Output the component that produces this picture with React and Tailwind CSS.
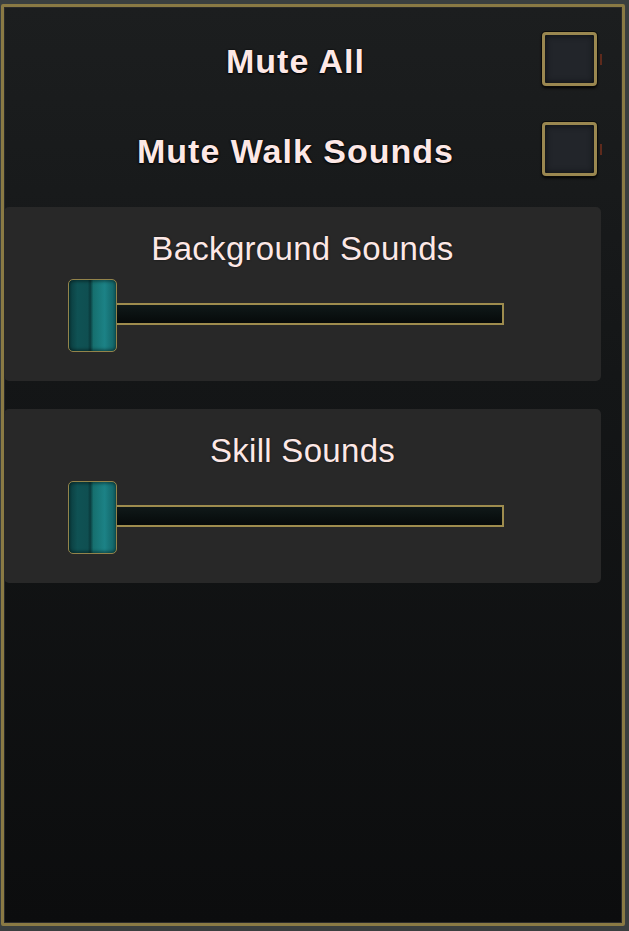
const font = { fontFamily: '"Liberation Sans", Arial, sans-serif' };

function Toggle({ label }) {
  return (
    <div className="flex items-center h-[55px] pr-[25px]">
      <div className="flex-1 pl-[45px] pt-1 text-center text-[34px] font-bold leading-none tracking-[1px] text-[#fde8e6] [text-shadow:0_0_2px_#000,0_1px_2px_#000]">
        {label}
      </div>
      <div className="relative">
        <div className="w-[55px] h-[54px] rounded-[4px] border-[3px] border-[#9a8750] bg-[#22252a] shadow-[inset_0_0_6px_#0b0d10,0_0_0_1px_#0a0a0a,0_2px_3px_#000]" />
        <div className="absolute right-[-5px] top-[22px] w-[2px] h-[11px] bg-[#5e2a1c]" />
      </div>
    </div>
  );
}

function Slider({ label }) {
  return (
    <div className="mr-[21px] rounded-[5px] bg-[#282828] pt-[25px] pb-[29px]">
      <div className="text-center text-[33px] leading-none tracking-[0.3px] text-[#fde8e6] [text-shadow:0_0_2px_#111]">
        {label}
      </div>
      <div className="mt-[14px] pl-[64px] flex items-center">
        <div className="relative z-10 w-[49px] h-[73px] rounded-[5px] border-[1.5px] border-[#93834a] bg-[linear-gradient(to_right,#0b3b3d_0%,#0f5254_18%,#0f4f51_40%,#0a3a3c_45%,#16706f_52%,#1c8286_76%,#136568_96%)] shadow-[inset_0_2px_3px_rgba(0,0,0,0.35),inset_0_-2px_3px_rgba(0,0,0,0.35)]" />
        <div className="-ml-[1px] -mt-[4px] w-[388px] h-[22px] border-2 border-l-0 border-[#9e8c4e] bg-[linear-gradient(to_bottom,#101919,#060a0a)]" />
      </div>
    </div>
  );
}

export default function App() {
  return (
    <div className="w-[629px] h-[931px] bg-[#3a3f3f] pt-[4px] pl-[1px] pr-[4px] pb-[5px]" style={font}>
      <div className="h-full border-[3px] border-[#8a7a44] rounded-[2px] bg-[linear-gradient(to_bottom,#1c1e1f,#141617_40%,#0c0d0e)] shadow-[inset_0_0_0_1px_#2a2a2a]">
        <div className="pt-[24px] flex flex-col gap-[35px]">
          <Toggle label="Mute All" />
          <Toggle label="Mute Walk Sounds" />
        </div>
        <div className="mt-[31px] flex flex-col gap-[28px]">
          <Slider label="Background Sounds" />
          <Slider label="Skill Sounds" />
        </div>
      </div>
    </div>
  );
}
